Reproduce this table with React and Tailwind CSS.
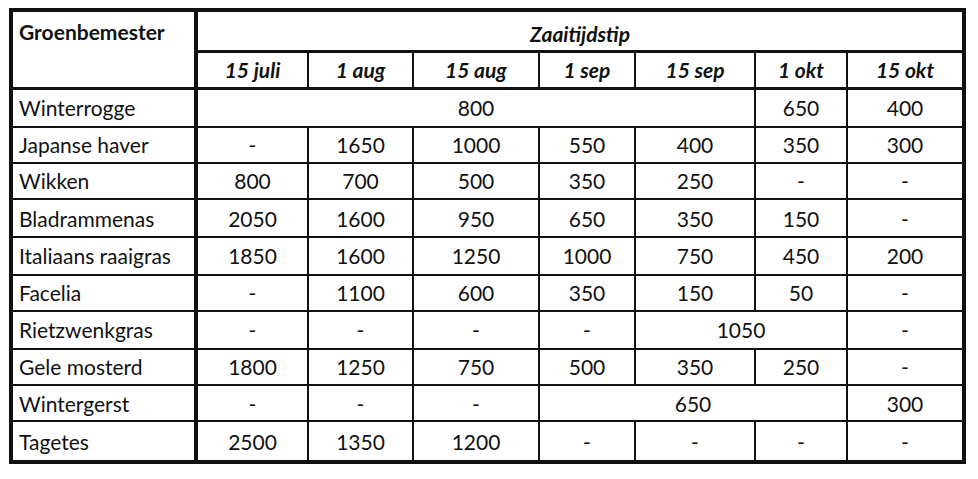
import React from 'react';

const months = ['15 juli', '1 aug', '15 aug', '1 sep', '15 sep', '1 okt', '15 okt'];

// each row: [name, height, cells]; a cell is a value or [value, colSpan]
const rows = [
  ['Winterrogge', 38.8, [['800', 5], '650', '400']],
  ['Japanse haver', 36.3, ['-', '1650', '1000', '550', '400', '350', '300']],
  ['Wikken', 36.3, ['800', '700', '500', '350', '250', '-', '-']],
  ['Bladrammenas', 37.8, ['2050', '1600', '950', '650', '350', '150', '-']],
  ['Italiaans raaigras', 37.8, ['1850', '1600', '1250', '1000', '750', '450', '200']],
  ['Facelia', 36.3, ['-', '1100', '600', '350', '150', '50', '-']],
  ['Rietzwenkgras', 37.3, ['-', '-', '-', '-', ['1050', 2], '-']],
  ['Gele mosterd', 36.8, ['1800', '1250', '750', '500', '350', '250', '-']],
  ['Wintergerst', 35.8, ['-', '-', '-', ['650', 3], '300']],
  ['Tagetes', 41.3, ['2500', '1350', '1200', '-', '-', '-', '-']],
];

const widths = [185, 112, 105, 126, 96, 120, 92, 117];

export default function App() {
  return (
    <div className="w-[978px] h-[479px] bg-white pt-[8px] pl-[9px]">
      <table
        className="table-fixed border-collapse border-[4px] border-[#111] text-[#111] text-[21px]"
        style={{ fontFamily: 'Lato, "Open Sans", sans-serif' }}
      >
        <colgroup>
          {widths.map((w, i) => (
            <col key={i} style={{ width: w }} />
          ))}
        </colgroup>
        <tbody>
          <tr className="h-[34px]">
            <th
              rowSpan={2}
              className="border-[3px] border-r-[4px] border-[#111] align-top text-left font-bold pl-[6px] pt-[4px]"
            >
              Groenbemester
            </th>
            <th colSpan={7} className="border-[3px] border-[#111] font-bold italic text-center pt-[6px]">
              Zaaitijdstip
            </th>
          </tr>
          <tr className="h-[37px]">
            {months.map((m) => (
              <th key={m} className="border-2 border-b-[3px] border-[#111] font-bold italic text-center">
                {m}
              </th>
            ))}
          </tr>
          {rows.map(([name, h, cells]) => (
            <tr key={name} style={{ height: h }}>
              <td className="border-2 border-r-[4px] border-[#111] pl-[6px] whitespace-nowrap">{name}</td>
              {cells.map((c, i) => {
                const [v, span] = Array.isArray(c) ? c : [c, 1];
                return (
                  <td key={i} colSpan={span} className="border-2 border-[#111] text-center">
                    {v}
                  </td>
                );
              })}
            </tr>
          ))}
        </tbody>
      </table>
    </div>
  );
}
